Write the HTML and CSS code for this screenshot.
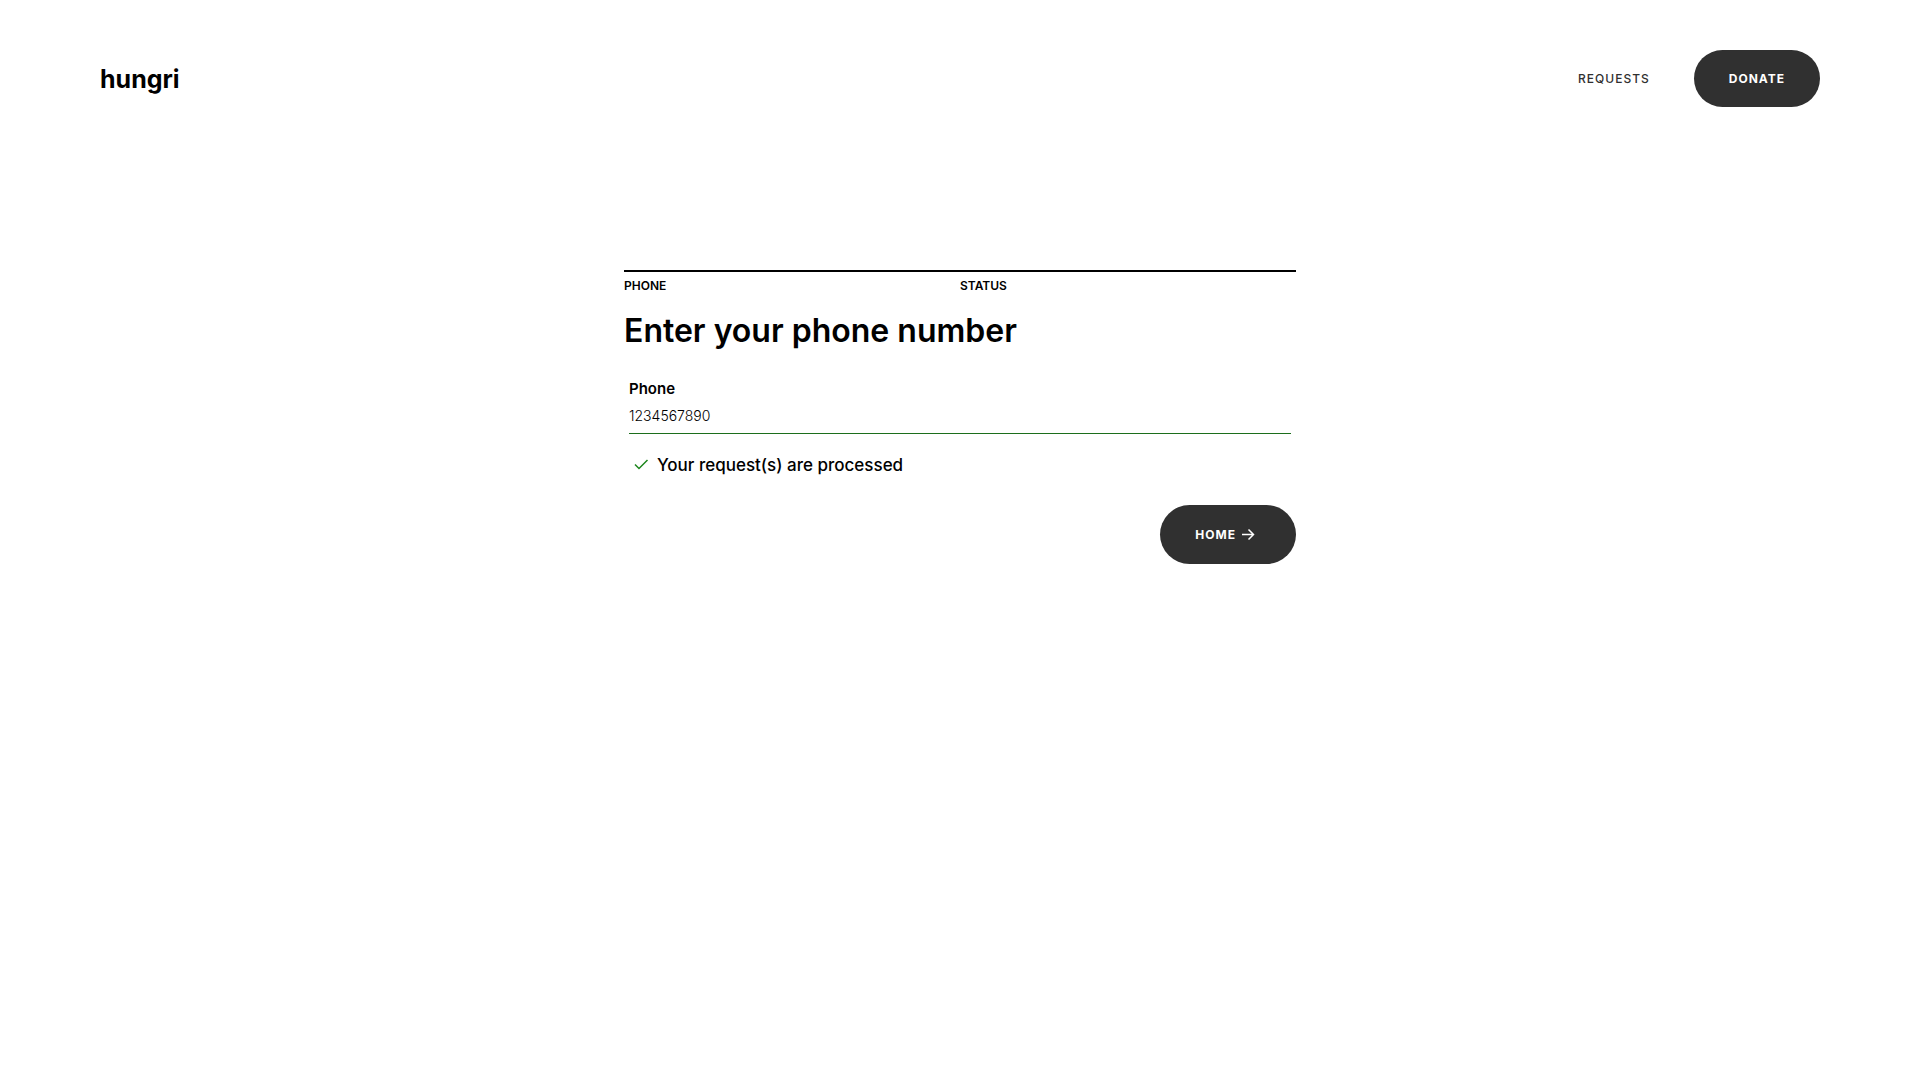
FILE: index.html
```
<!DOCTYPE html>
<html lang="en">
<head>
<meta charset="utf-8">
<meta name="viewport" content="width=device-width, initial-scale=1">
<title>hungri</title>
<link rel="stylesheet" href="styles.css">
</head>
<body>
<header class="header">
  <a class="logo" href="#">hungri</a>
  <nav class="nav">
    <a class="nav-link" href="#">REQUESTS</a>
    <button class="pill" type="button">DONATE</button>
  </nav>
</header>
<main class="card">
  <div class="steps"><span>PHONE</span><span>STATUS</span></div>
  <h1 class="title">Enter your phone number</h1>
  <form class="form">
    <label class="label" for="phone">Phone</label>
    <input class="input" id="phone" type="tel" value="1234567890">
    <p class="message">
      <svg class="check" viewBox="0 0 18 18" aria-hidden="true"><path d="M4 8.500l4 4L16.500 4"/></svg>
      Your request(s) are processed
    </p>
  </form>
  <div class="actions">
    <button class="pill pill-home" type="button">HOME
      <svg class="arrow" viewBox="0 0 16 16" aria-hidden="true"><path d="M2 7.500h11.500M8.500 2.500l5 5-5 5"/></svg>
    </button>
  </div>
</main>
</body>
</html>
```
FILE: styles.css
```
* {
  box-sizing: border-box;
}

body {
  margin: 0;
  background: #fff;
  color: #000;
  font-family: Inter, "Liberation Sans", sans-serif;
}

.header {
  display: flex;
  align-items: center;
  justify-content: space-between;
  padding: 50px 100px;
}

.logo {
  color: #000;
  font-size: 25px;
  font-weight: 700;
  line-height: 32px;
  text-decoration: none;
}

.nav {
  display: flex;
  align-items: center;
  gap: 44px;
}

.nav-link {
  color: #303030;
  font-size: 12px;
  font-weight: 500;
  letter-spacing: 1px;
  text-decoration: none;
}

.pill {
  display: flex;
  align-items: center;
  gap: 4px;
  padding: 20px 35px;
  border: 0;
  border-radius: 30px;
  background: #303030;
  color: #fff;
  font-family: inherit;
  font-size: 12px;
  font-weight: 700;
  line-height: 17px;
  letter-spacing: 1px;
}

.card {
  width: 35%;
  min-width: 320px;
  margin: 113px auto 0;
}

.steps {
  display: grid;
  grid-template-columns: 1fr 1fr;
  padding-top: 6px;
  border-top: 2px solid #000;
  font-size: 12px;
  font-weight: 600;
  line-height: 16px;
}

.title {
  margin: 17px 0 0;
  font-size: 32px;
  font-weight: 600;
  line-height: 40px;
}

.form {
  padding: 28px 5px 0;
}

.label {
  display: block;
  font-size: 15px;
  font-weight: 600;
  line-height: 20px;
}

.input {
  display: block;
  width: 100%;
  height: 35px;
  padding: 0 0 2px;
  border: 0;
  border-bottom: 1px solid #1c6e1c;
  outline: 0;
  color: #000;
  background: transparent;
  font-family: inherit;
  font-size: 14px;
  font-weight: 300;
}

.message {
  display: flex;
  align-items: center;
  gap: 8px;
  margin: 19px 0 0 2px;
  font-size: 17px;
  font-weight: 500;
  line-height: 24px;
}

.check {
  width: 18px;
  height: 18px;
  fill: none;
  stroke: #1c861c;
  stroke-width: 1.5;
}

.actions {
  display: flex;
  justify-content: flex-end;
  margin-top: 28px;
}

.pill-home {
  padding: 21px 40px 21px 35px;
}

.arrow {
  width: 16px;
  height: 16px;
  fill: none;
  stroke: #fff;
  stroke-width: 1.5;
}
```
